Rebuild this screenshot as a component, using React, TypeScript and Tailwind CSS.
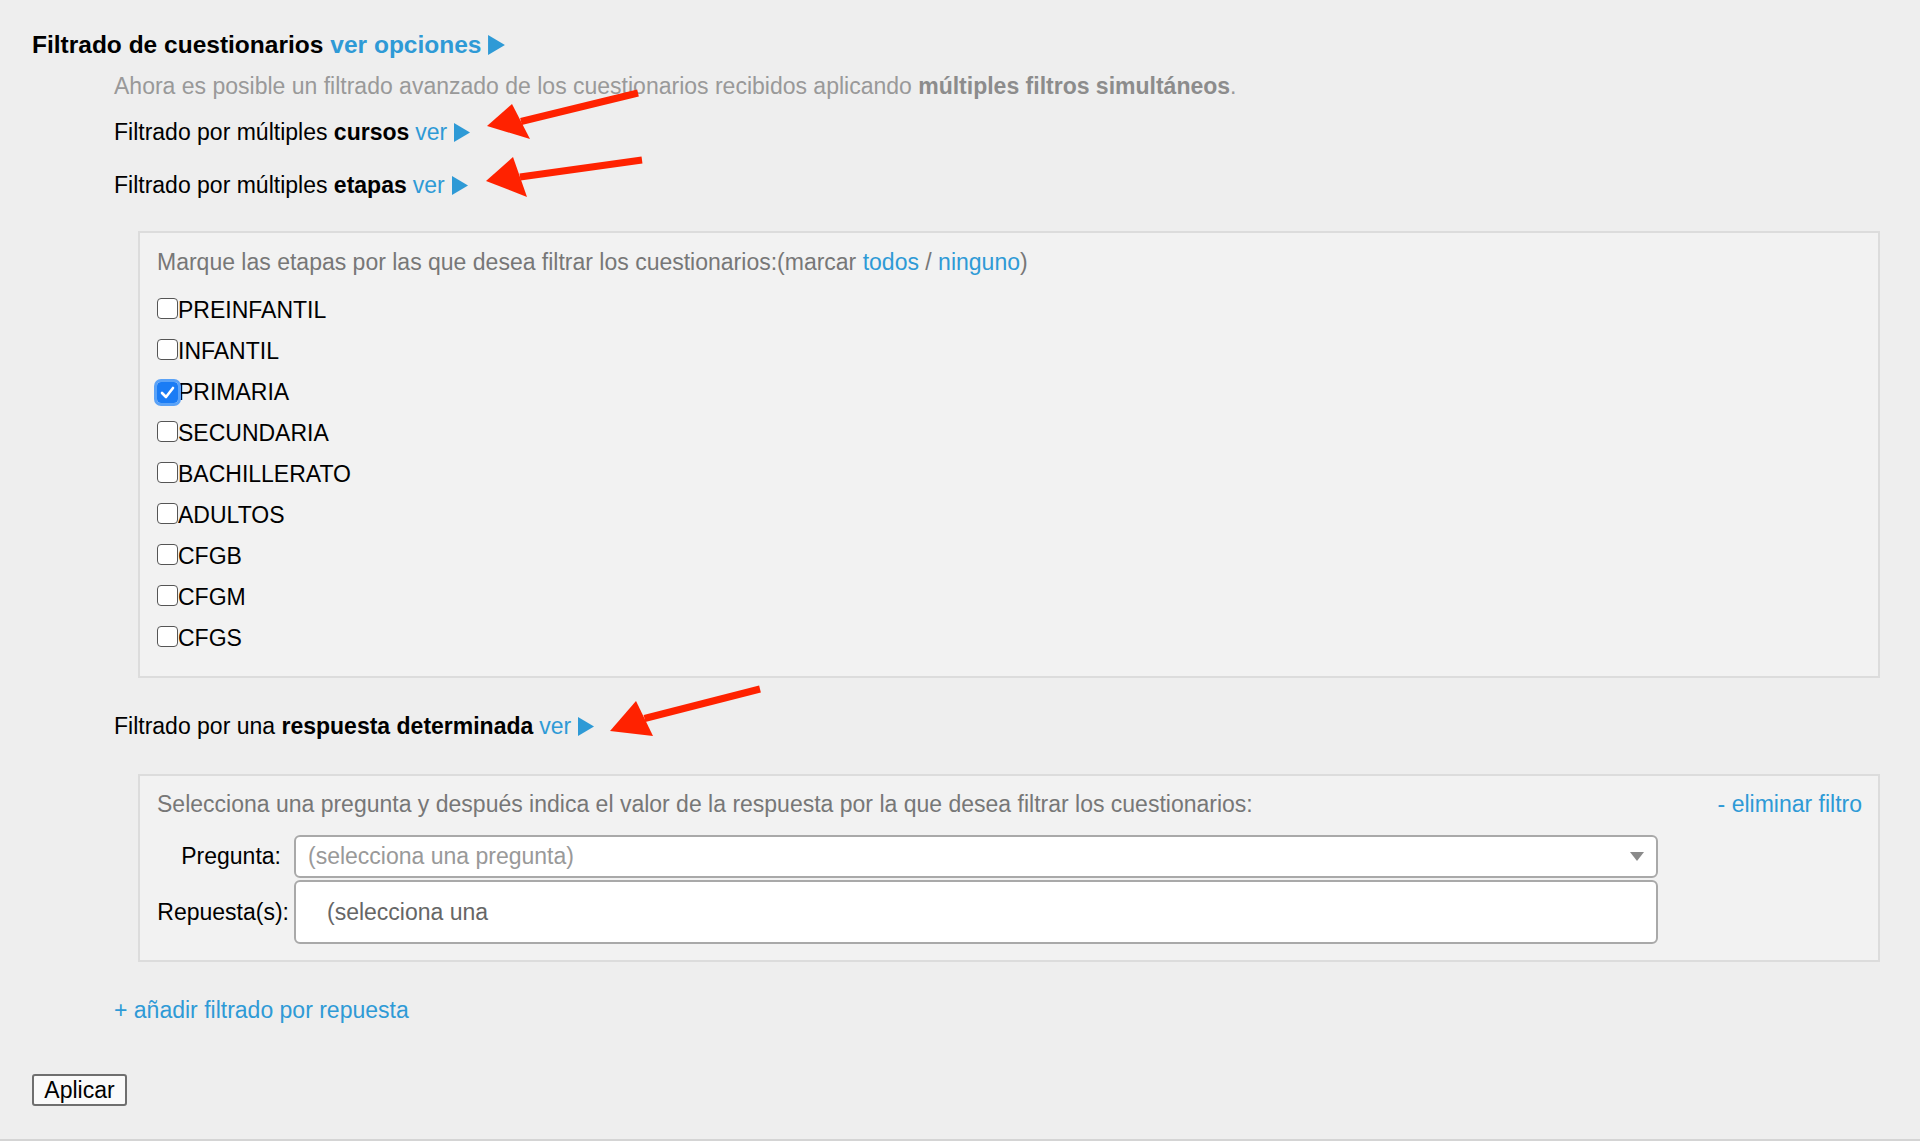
import * as React from 'react';

const etapas = [
  { name: 'PREINFANTIL', checked: false },
  { name: 'INFANTIL', checked: false },
  { name: 'PRIMARIA', checked: true },
  { name: 'SECUNDARIA', checked: false },
  { name: 'BACHILLERATO', checked: false },
  { name: 'ADULTOS', checked: false },
  { name: 'CFGB', checked: false },
  { name: 'CFGM', checked: false },
  { name: 'CFGS', checked: false },
];

const Triangle = ({ big }: { big?: boolean }) => (
  <svg width={big ? 17 : 16} height={big ? 20 : 19} viewBox="0 0 16 19" className="inline-block ml-[7px]">
    <polygon points="0,0 16,9.5 0,19" fill="#2e9ad6" />
  </svg>
);

const Check = ({ checked }: { checked: boolean }) =>
  checked ? (
    <span className="relative inline-flex h-[21px] w-[21px] items-center justify-center rounded-[4px] bg-[#1a7cf5] outline-[3px] outline-[#5aa2f7]">
      <svg width="15" height="13" viewBox="0 0 15 13">
        <path d="M2 7 L6 11 L13 2" stroke="white" strokeWidth="2.6" fill="none" strokeLinecap="round" strokeLinejoin="round" />
      </svg>
    </span>
  ) : (
    <span className="inline-block h-[21px] w-[21px] -translate-y-[2px] rounded-[4px] border-[1.5px] border-[#555] bg-white" />
  );

const Arrow = ({ tip, end, a, b }: { tip: number[]; end: number[]; a: number[]; b: number[] }) => {
  const mx = (a[0] + b[0]) / 2;
  const my = (a[1] + b[1]) / 2;
  return (
    <g>
      <line x1={mx} y1={my} x2={end[0]} y2={end[1]} stroke="#ff2200" strokeWidth="7" />
      <polygon points={`${tip[0]},${tip[1]} ${a[0]},${a[1]} ${b[0]},${b[1]}`} fill="#ff2200" />
    </g>
  );
};

export default function App() {
  return (
    <div className="relative min-h-[1141px] w-full bg-[#eeeeee] border-b-2 border-[#d4d4d4] font-['Liberation_Sans',Arial,sans-serif] text-[23px] text-black">
      <div className="px-[32px] pt-[30px]">
        <div className="flex items-center leading-[30px] text-[24.5px]">
          <span className="font-bold">Filtrado de cuestionarios</span>
          <span className="ml-[7px] font-bold text-[#2e9ad6]">ver opciones</span>
          <Triangle big />
        </div>

        <div className="ml-[82px]">
          <p className="mt-[11px] leading-[30px] text-[#999999]">
            Ahora es posible un filtrado avanzado de los cuestionarios recibidos aplicando{' '}
            <b className="text-[#8c8c8c]">múltiples filtros simultáneos</b>.
          </p>

          <div className="mt-[16px] flex items-center leading-[30px]">
            <span>Filtrado por múltiples <b>cursos</b></span>
            <span className="ml-[6px] text-[#2e9ad6]">ver</span>
            <Triangle />
          </div>

          <div className="mt-[23px] flex items-center leading-[30px]">
            <span>Filtrado por múltiples <b>etapas</b></span>
            <span className="ml-[6px] text-[#2e9ad6]">ver</span>
            <Triangle />
          </div>

          <div className="ml-[24px] mr-[8px] mt-[31px] border-2 border-[#dcdcdc] bg-[#f2f2f2] pl-[17px] pt-[14px] pb-[17px]">
            <p className="leading-[30px] text-[#777777]">
              Marque las etapas por las que desea filtrar los cuestionarios:(marcar{' '}
              <span className="text-[#2e9ad6]">todos</span> / <span className="text-[#2e9ad6]">ninguno</span>)
            </p>
            <div className="mt-[13px] flex flex-col">
              {etapas.map((e) => (
                <label key={e.name} className="flex h-[41px] items-center">
                  <Check checked={e.checked} />
                  <span>{e.name}</span>
                </label>
              ))}
            </div>
          </div>

          <div className="mt-[33px] flex items-center leading-[30px]">
            <span>Filtrado por una <b>respuesta determinada</b></span>
            <span className="ml-[6px] text-[#2e9ad6]">ver</span>
            <Triangle />
          </div>

          <div className="ml-[24px] mr-[8px] mt-[33px] border-2 border-[#dcdcdc] bg-[#f2f2f2] pl-[17px] pr-[16px] pt-[13px] pb-[16px]">
            <div className="flex items-center justify-between leading-[30px]">
              <span className="text-[#777777]">
                Selecciona una pregunta y después indica el valor de la respuesta por la que desea filtrar los cuestionarios:
              </span>
              <span className="text-[#2e9ad6]">- eliminar filtro</span>
            </div>
            <div className="mt-[16px] grid grid-cols-[137px_1364px] gap-y-[2px]">
              <div className="flex items-center justify-end pr-[13px]">Pregunta:</div>
              <div className="flex h-[43px] items-center justify-between rounded-[6px] border-2 border-[#a9a9a9] bg-white pl-[12px] pr-[12px] text-[#999999]">
                <span>(selecciona una pregunta)</span>
                <svg width="14" height="10" viewBox="0 0 14 10">
                  <polygon points="0,0 14,0 7,9" fill="#8a8a8a" />
                </svg>
              </div>
              <div className="flex items-center justify-end pr-[5px]">Repuesta(s):</div>
              <div className="flex h-[64px] items-center rounded-[6px] border-2 border-[#a9a9a9] bg-white pl-[31px] text-[#666666]">
                (selecciona una
              </div>
            </div>
          </div>

          <p className="mt-[33px] leading-[30px] text-[#2e9ad6]">+ añadir filtrado por repuesta</p>
        </div>

        <button className="mt-[49px] h-[32px] w-[95px] rounded-[3px] border-2 border-[#6f6f6f] bg-[#fafafa] text-[23px] leading-none text-black">
          Aplicar
        </button>
      </div>

      <svg className="pointer-events-none absolute left-0 top-0" width="1920" height="1141">
        <Arrow tip={[487, 126]} end={[638, 93]} a={[512, 104]} b={[530, 139]} />
        <Arrow tip={[486, 181]} end={[642, 160]} a={[513, 157]} b={[527, 197]} />
        <Arrow tip={[610, 731]} end={[760, 689]} a={[636, 701]} b={[653, 736]} />
      </svg>
    </div>
  );
}
